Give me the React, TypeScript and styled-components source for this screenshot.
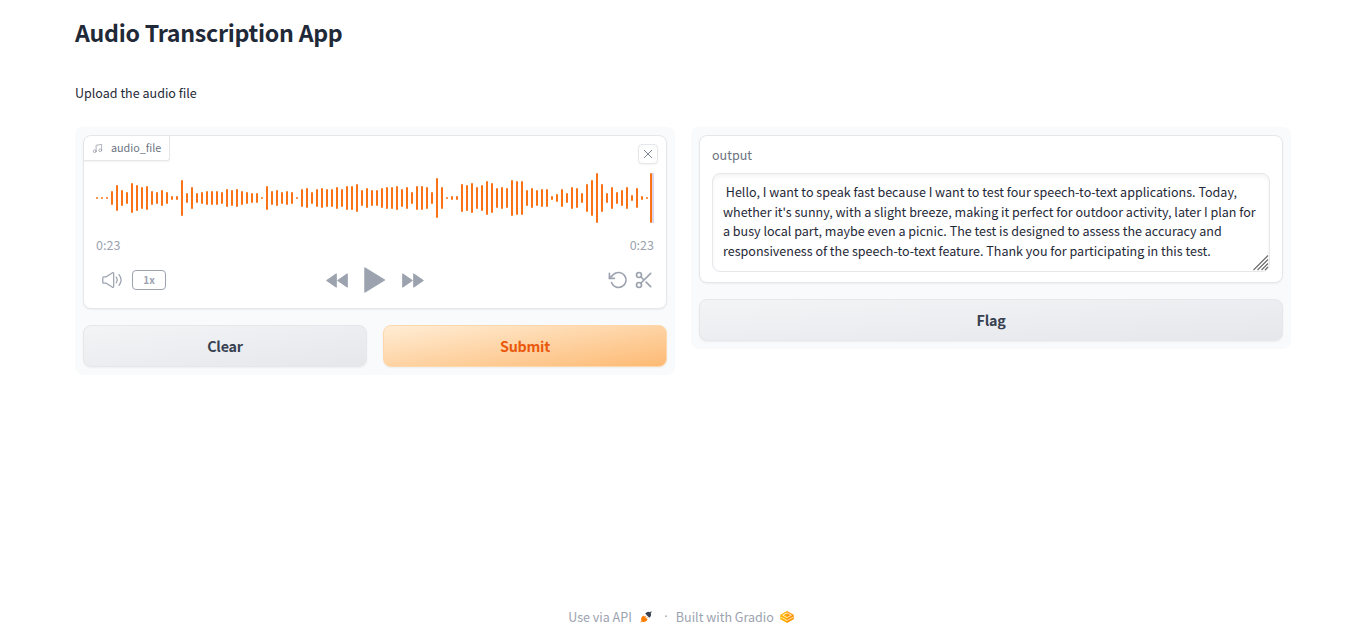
import React from "react";
import styled, { createGlobalStyle } from "styled-components";

const GlobalStyle = createGlobalStyle`
  * { box-sizing: border-box; }
  body {
    margin: 0;
    background: #fff;
    color: #1f2937;
    font-family: "Source Sans Pro", "Noto Sans CJK SC", sans-serif;
    font-size: 12.54px;
    line-height: 19.6px;
  }
  button { font-family: inherit; cursor: pointer; }
`;

const Page = styled.div`
  display: flex;
  flex-direction: column;
  height: 643px;
  padding: 0 75px;
`;

const Title = styled.h1`
  margin: 14px 0 0;
  font-size: 23.2px;
  line-height: 36px;
  font-weight: 600;
  letter-spacing: -0.28px;
`;

const Description = styled.p`
  margin: 33px 0 0;
  line-height: 20px;
`;

const Columns = styled.main`
  display: flex;
  align-items: flex-start;
  gap: 16px;
  width: 1216px;
  margin-top: 24px;
`;

const Panel = styled.section`
  display: flex;
  flex: 1;
  flex-direction: column;
  gap: 16px;
  padding: 8px;
  border-radius: 8px;
  background: #f9fafb;
`;

const Block = styled.div<{ $height: number }>`
  position: relative;
  height: ${(p) => p.$height}px;
  padding: 0 12px;
  border: 1px solid #e5e7eb;
  border-radius: 8px;
  background: #fff;
  box-shadow: 0 1px 2px rgba(0, 0, 0, 0.05);
`;

const FileLabel = styled.div`
  position: absolute;
  top: 0;
  left: 0;
  display: flex;
  align-items: center;
  gap: 8px;
  height: 25px;
  padding: 0 8px;
  border-right: 1px solid #e5e7eb;
  border-bottom: 1px solid #e5e7eb;
  border-radius: 7px 0 3px 0;
  box-shadow: 0 1px 2px rgba(0, 0, 0, 0.05);
  color: #6b7280;
  font-size: 10.75px;
`;

const CloseButton = styled.button`
  position: absolute;
  top: 8px;
  right: 8px;
  display: flex;
  align-items: center;
  justify-content: center;
  width: 20px;
  height: 20px;
  padding: 0;
  border: 1px solid #e5e7eb;
  border-radius: 4px;
  background: #fff;
  box-shadow: 0 1px 2px rgba(0, 0, 0, 0.05);
  color: #7b8290;
`;

const Wave = styled.svg`
  display: block;
  margin-top: 37px;
`;

const Times = styled.div`
  display: flex;
  justify-content: space-between;
  margin-top: 12px;
  color: #9ca3af;
  line-height: 20px;
`;

const Controls = styled.div`
  display: grid;
  grid-template-columns: 1fr auto 1fr;
  align-items: center;
  height: 30px;
  margin-top: 10px;
  color: #9ca3af;
`;

const ControlGroup = styled.div<{ $gap: number; $indent?: number; $end?: boolean }>`
  display: flex;
  align-items: center;
  justify-content: ${(p) => (p.$end ? "flex-end" : "flex-start")};
  gap: ${(p) => p.$gap}px;
  padding-left: ${(p) => p.$indent ?? 0}px;
`;

const IconButton = styled.button`
  display: flex;
  padding: 0;
  border: 0;
  background: none;
  color: inherit;
`;

const Speed = styled.button`
  width: 34px;
  height: 20px;
  padding: 0;
  border: 1px solid #9ca3af;
  border-radius: 4px;
  background: none;
  color: #9ca3af;
  font-size: 10px;
  font-weight: 600;
  line-height: 18px;
`;

const ButtonRow = styled.div`
  display: flex;
  gap: 16px;
`;

const Button = styled.button<{ $primary?: boolean }>`
  flex: 1 1 0;
  height: 42px;
  padding: 0;
  border: 1px solid ${(p) => (p.$primary ? "#fed7aa" : "#e5e7eb")};
  border-radius: 8px;
  background: ${(p) =>
    p.$primary
      ? "linear-gradient(to bottom right, #ffedd5, #fdba74)"
      : "linear-gradient(to bottom right, #f3f4f6, #e5e7eb)"};
  box-shadow: 0 1px 2px rgba(0, 0, 0, 0.05);
  color: ${(p) => (p.$primary ? "#ea580c" : "#374151")};
  font-size: 14.3px;
  font-weight: 600;
  line-height: 24px;
  letter-spacing: -0.2px;
`;

const FieldLabel = styled.label`
  display: block;
  margin-top: 9px;
  color: #6b7280;
  line-height: 20px;
`;

const OutputWrap = styled.div`
  position: relative;
  margin-top: 8px;
`;

const Output = styled.textarea`
  display: block;
  width: 558px;
  height: 99px;
  padding: 8px 10px;
  border: 1px solid #e5e7eb;
  border-radius: 8px;
  outline: none;
  background: #fff;
  box-shadow: inset 0 2px 4px rgba(0, 0, 0, 0.05);
  color: #1f2937;
  font: inherit;
  white-space: pre;
  overflow: hidden;
  resize: none;
`;

const ResizeGrip = styled.svg`
  position: absolute;
  right: 1px;
  bottom: 1px;
  cursor: ns-resize;
`;

const Footer = styled.footer`
  display: flex;
  align-items: center;
  justify-content: center;
  height: 20px;
  margin-top: auto;
  margin-bottom: 16px;
  padding-right: 4px;
  color: #9ca3af;
`;

const FooterLink = styled.span`
  display: flex;
  align-items: center;
`;

const Dot = styled.span`
  width: 4px;
  margin: 0 8px 0 12px;
  font-family: "Noto Sans", sans-serif;
  text-align: center;
`;

const BAR_HEIGHTS = [
  2, 2, 2, 14, 26, 16, 12, 30, 26, 22, 24, 14, 12, 16, 12, 4, 4, 36, 10, 22,
  10, 12, 14, 14, 14, 12, 18, 16, 18, 14, 12, 10, 10, 2, 24, 14, 16, 12, 14, 12,
  2, 18, 20, 12, 18, 20, 18, 18, 22, 18, 24, 24, 28, 16, 20, 16, 16, 20, 22, 22,
  24, 18, 22, 12, 24, 24, 22, 12, 40, 22, 2, 4, 4, 28, 26, 30, 22, 26, 34, 30,
  20, 22, 20, 36, 34, 34, 16, 20, 16, 18, 18, 4, 8, 18, 10, 22, 20, 10, 28, 36,
  50, 28, 10, 22, 12, 16, 22, 6, 20, 4, 2,
];

const Waveform = () => (
  <Wave width="558" height="50" viewBox="0 0 558 50">
    {BAR_HEIGHTS.map((h, i) => (
      <rect key={i} x={i * 5} y={25 - h / 2} width="2" height={h} rx="1" fill="#f97316" />
    ))}
    <rect x="554" y="0" width="2" height="50" rx="1" fill="#f97316" />
    <rect x="556" y="0" width="2" height="50" fill="#ddd6ea" />
  </Wave>
);

const MusicIcon = () => (
  <svg width="11" height="11" viewBox="0 0 24 24" fill="none" stroke="#9197a3" strokeWidth="1.6" strokeLinecap="round" strokeLinejoin="round">
    <path d="M9 18V5l12-2v13" />
    <circle cx="6" cy="18" r="3" />
    <circle cx="18" cy="16" r="3" />
  </svg>
);

const CloseIcon = () => (
  <svg width="10" height="10" viewBox="0 0 10 10" fill="none" stroke="currentColor" strokeWidth="1">
    <path d="M1 1l8 8M9 1L1 9" />
  </svg>
);

const VolumeIcon = () => (
  <svg width="20" height="16" viewBox="0 0 20 16" fill="none" stroke="currentColor" strokeWidth="1.25" strokeLinecap="round" strokeLinejoin="round">
    <path d="M.8 5.7Q.8 4.8 1.7 4.8H4.2L10.2.9Q11.7.1 11.7 1.7V14.3Q11.7 15.9 10.2 15.1L4.2 11.2H1.7Q.8 11.2.8 10.3Z" />
    <path d="M14.2 5.2Q16.2 8 14.2 10.8M17 2.7Q21.3 8 17 13.3" />
  </svg>
);

const RewindIcon = () => (
  <svg width="22" height="15" viewBox="0 0 22 15" fill="currentColor" stroke="currentColor" strokeLinejoin="round">
    <path d="M10.3.8V14.2L.6 7.5ZM21.3.8V14.2L11.6 7.5Z" />
  </svg>
);

const ForwardIcon = () => (
  <svg width="22" height="15" viewBox="0 0 22 15" fill="currentColor" stroke="currentColor" strokeLinejoin="round">
    <path d="M.7.8V14.2L10.4 7.5ZM11.7.8V14.2L21.4 7.5Z" />
  </svg>
);

const PlayIcon = () => (
  <svg width="22" height="26" viewBox="0 0 22 26" fill="currentColor" stroke="currentColor" strokeLinejoin="round">
    <path d="M.8.7V25.3L20.8 13Z" />
  </svg>
);

const UndoIcon = () => (
  <svg width="20" height="20" viewBox="0 0 24 24" fill="none" stroke="currentColor" strokeWidth="2" strokeLinecap="round" strokeLinejoin="round">
    <path d="M1.7 4v6h6" />
    <path d="M4.2 15a9 9 0 1 0 2.1-9.4L1.7 10" />
  </svg>
);

const TrimIcon = () => (
  <svg width="20" height="20" viewBox="0 0 24 24" fill="none" stroke="currentColor" strokeWidth="2" strokeLinecap="round" strokeLinejoin="round">
    <circle cx="6" cy="6" r="3" />
    <circle cx="6" cy="18" r="3" />
    <path d="M20 4L8.1 15.9M14.5 14.5L20 20M8.1 8.1L12 12" />
  </svg>
);

const PlugIcon = styled(({ className }: { className?: string }) => (
  <svg className={className} width="12" height="12" viewBox="0 0 12 12">
    <path d="M1.8 6L3.4 4.4L7.6 8.6L6 10.2Q4 11.6 2 10.4L.9 11.6L.3 11L1.5 9.9Q.3 8 1.8 6Z" fill="#ff7c00" />
    <path d="M4.7 6L5.9 4.8M6.2 7.5L7.4 6.3" stroke="#ff7c00" strokeWidth="1" />
    <path d="M5.2 2.6L6.5 1.4Q8.3.4 10 1.3L11.1.2L11.8.9L10.7 2Q11.7 3.9 10.4 5.7L9.2 6.8Z" fill="#374151" />
  </svg>
))`
  margin-left: 8px;
`;

const GradioIcon = styled(({ className }: { className?: string }) => (
  <svg className={className} width="14" height="12" viewBox="0 0 14 12" fill="none" strokeLinejoin="round">
    <path d="M.3 3.8L7 0V12L.3 8.3Z" fill="#ffb000" />
    <path d="M13.7 3.8L7 0V12L13.7 8.3Z" fill="#ff9500" />
    <path d="M2.6 4.2L7 1.9L11.4 4.2L7 6.6Z" stroke="#fff3d6" strokeWidth=".9" />
    <path d="M1 6.2L7 9.5L13 6.2" stroke="#fff3d6" strokeWidth=".8" />
  </svg>
))`
  margin-left: 6px;
`;

const TRANSCRIPT = ` Hello, I want to speak fast because I want to test four speech-to-text applications. Today,
whether it's sunny, with a slight breeze, making it perfect for outdoor activity, later I plan for
a busy local part, maybe even a picnic. The test is designed to assess the accuracy and
responsiveness of the speech-to-text feature. Thank you for participating in this test.`;

export default function App() {
  return (
    <Page>
      <GlobalStyle />
      <Title>Audio Transcription App</Title>
      <Description>Upload the audio file</Description>
      <Columns>
        <Panel>
          <Block $height={174}>
            <FileLabel>
              <MusicIcon />
              audio_file
            </FileLabel>
            <CloseButton aria-label="Remove">
              <CloseIcon />
            </CloseButton>
            <Waveform />
            <Times>
              <span>0:23</span>
              <span>0:23</span>
            </Times>
            <Controls>
              <ControlGroup $gap={10} $indent={6}>
                <IconButton aria-label="Volume"><VolumeIcon /></IconButton>
                <Speed>1x</Speed>
              </ControlGroup>
              <ControlGroup $gap={16}>
                <IconButton aria-label="Rewind"><RewindIcon /></IconButton>
                <IconButton aria-label="Play"><PlayIcon /></IconButton>
                <IconButton aria-label="Forward"><ForwardIcon /></IconButton>
              </ControlGroup>
              <ControlGroup $gap={6.4} $end>
                <IconButton aria-label="Reset"><UndoIcon /></IconButton>
                <IconButton aria-label="Trim"><TrimIcon /></IconButton>
              </ControlGroup>
            </Controls>
          </Block>
          <ButtonRow>
            <Button>Clear</Button>
            <Button $primary>Submit</Button>
          </ButtonRow>
        </Panel>
        <Panel>
          <Block $height={148}>
            <FieldLabel htmlFor="output">output</FieldLabel>
            <OutputWrap>
              <Output id="output" readOnly spellCheck={false} value={TRANSCRIPT} />
              <ResizeGrip width="16" height="16" viewBox="0 0 16 16" stroke="#6b6b6b" strokeWidth="1.1">
                <path d="M.5 15L15 .5M4.5 15L15 4.5M8.5 15L15 8.5M12 15L15 12" />
              </ResizeGrip>
            </OutputWrap>
          </Block>
          <ButtonRow>
            <Button>Flag</Button>
          </ButtonRow>
        </Panel>
      </Columns>
      <Footer>
        <FooterLink>
          Use via API
          <PlugIcon />
        </FooterLink>
        <Dot>·</Dot>
        <FooterLink>
          Built with Gradio
          <GradioIcon />
        </FooterLink>
      </Footer>
    </Page>
  );
}
